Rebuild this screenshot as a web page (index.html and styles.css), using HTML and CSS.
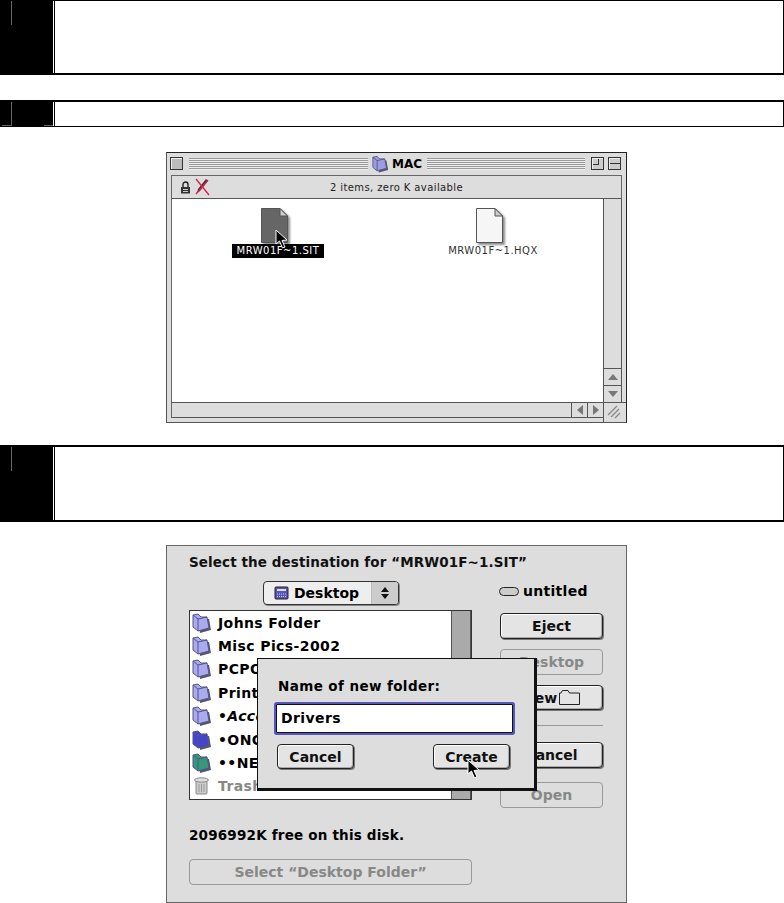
FILE: index.html
```html
<!DOCTYPE html>
<html lang="en">
<head>
    <meta charset="UTF-8">
    <title>Driver install steps</title>
    <link rel="stylesheet" href="styles.css">
</head>
<body>
    <svg class="defs" width="0" height="0">
        <symbol id="folder" viewBox="0 0 20 20">
            <path d="M6 6 L17 6 L19 17 L8 20 Z" fill="#55556f"/>
            <path d="M1 2 L6 1 L9 4 L15 4 L17 15 L6 18 L1 14 Z" fill="currentColor" stroke="#55558a" stroke-width="1"/>
            <path d="M1 2 L6 6 L15 4 M6 6 L6 18" fill="none" stroke="#55558a" stroke-width="1"/>
        </symbol>
        <symbol id="cursor" viewBox="0 0 14 20">
            <path d="M1 1 L1 15 L4.5 12 L7.5 19 L10 18 L7 11.5 L12 11 Z" fill="#000" stroke="#fff" stroke-width="1"/>
        </symbol>
        <symbol id="doc" viewBox="0 0 27 35">
            <path d="M.5 .5 H19 L26.5 8 V34.5 H.5 Z" fill="currentColor" stroke="#555"/>
            <path d="M19 .5 V8 H26.5 Z" fill="#ccc" stroke="#555"/>
        </symbol>
    </svg>

    <section class="step step-tall">
        <div class="step-num"><i class="tick"></i></div>
        <div class="step-body"></div>
    </section>

    <section class="step step-short">
        <div class="step-num"><i class="tick"></i><i class="foot foot-left"></i><i class="foot foot-right"></i></div>
        <div class="step-body"></div>
    </section>

    <div class="finder">
        <div class="finder-title">
            <span class="box"></span>
            <span class="stripes stripes-left"></span>
            <svg class="title-icon" width="17" height="18"><use href="#folder"/></svg>
            <span class="title-text">MAC</span>
            <span class="stripes"></span>
            <span class="box box-zoom"></span>
            <span class="box box-shade"></span>
        </div>
        <div class="finder-info">
            <svg class="lock" width="11" height="13" viewBox="0 0 11 13">
                <path d="M3 6 V3.5 a2.5 2.5 0 0 1 5 0 V6" fill="none" stroke="#222" stroke-width="1.4"/>
                <rect x="1" y="6" width="9" height="6.5" fill="#333"/>
                <path d="M3 8.5 H8 M3 10.5 H8" stroke="#ccc"/>
            </svg>
            <svg class="pencil" width="16" height="18" viewBox="0 0 16 18">
                <path d="M12 1 L14 3 L6 13 L3 15 L4 11 Z" fill="#333"/>
                <path d="M2 1 L15 17 M14 2 L2 16" stroke="#d8204a" stroke-width="1.3"/>
            </svg>
            <span class="info-text">2 items, zero K available</span>
        </div>
        <div class="finder-main">
            <div class="files">
                <div class="file file-sit">
                    <svg class="doc doc-dark" width="27" height="35"><use href="#doc"/></svg>
                    <span class="file-name selected">MRW01F~1.SIT</span>
                </div>
                <div class="file file-hqx">
                    <svg class="doc doc-light" width="27" height="35"><use href="#doc"/></svg>
                    <span class="file-name">MRW01F~1.HQX</span>
                </div>
                <svg class="cursor cursor-finder" width="14" height="20"><use href="#cursor"/></svg>
            </div>
            <div class="vscroll">
                <span class="track"></span>
                <span class="arrow"><svg width="10" height="6"><path d="M5 0 L10 6 H0 Z" fill="#777"/></svg></span>
                <span class="arrow"><svg width="10" height="6"><path d="M5 6 L10 0 H0 Z" fill="#777"/></svg></span>
            </div>
        </div>
        <div class="finder-bottom">
            <span class="track"></span>
            <span class="arrow arrow-h"><svg width="6" height="10"><path d="M0 5 L6 0 V10 Z" fill="#777"/></svg></span>
            <span class="arrow arrow-h"><svg width="6" height="10"><path d="M6 5 L0 0 V10 Z" fill="#777"/></svg></span>
            <span class="grow"><svg width="14" height="14"><path d="M1 10 L10 1 M4 12 L12 4 M8 13 L13 8" stroke="#888" stroke-width="1.3"/></svg></span>
        </div>
    </div>

    <section class="step step-mid">
        <div class="step-num"><i class="tick"></i></div>
        <div class="step-body"></div>
    </section>

    <div class="dialog">
        <h2 class="dialog-title">Select the destination for “MRW01F~1.SIT”</h2>
        <div class="dialog-cols">
            <div class="col-left">
                <div class="popup">
                    <svg width="15" height="14" viewBox="0 0 15 14">
                        <rect x="1" y="1" width="13" height="12" rx="1" fill="#5555bb" stroke="#222"/>
                        <path d="M3 4 H12" stroke="#ddd" stroke-width="2"/>
                        <path d="M3 8 H12 M3 10.5 H12" stroke="#ccd" stroke-dasharray="1 1"/>
                    </svg>
                    <span class="popup-label">Desktop</span>
                    <span class="popup-arrows">
                        <svg width="10" height="14"><path d="M5 1 L9 6 H1 Z M5 13 L9 8 H1 Z" fill="#111"/></svg>
                    </span>
                </div>
                <div class="list">
                    <ul class="list-rows">
                        <li><svg class="f-plain" width="20" height="20"><use href="#folder"/></svg>Johns Folder</li>
                        <li><svg class="f-plain" width="20" height="20"><use href="#folder"/></svg>Misc Pics-2002</li>
                        <li><svg class="f-plain" width="20" height="20"><use href="#folder"/></svg>PCPO</li>
                        <li><svg class="f-plain" width="20" height="20"><use href="#folder"/></svg>Print</li>
                        <li class="alias"><svg class="f-plain" width="20" height="20"><use href="#folder"/></svg>•Acce</li>
                        <li><svg class="f-blue" width="20" height="20"><use href="#folder"/></svg>•ONG</li>
                        <li><svg class="f-green" width="20" height="20"><use href="#folder"/></svg>••NE</li>
                        <li class="dim">
                            <svg width="20" height="20" viewBox="0 0 20 20">
                                <rect x="4" y="5" width="11" height="13" rx="1" fill="#ccc" stroke="#888"/>
                                <ellipse cx="9.5" cy="4" rx="7" ry="2.2" fill="#ddd" stroke="#888"/>
                                <path d="M7 8 V16 M9.5 8 V16 M12 8 V16" stroke="#999"/>
                            </svg>Trash
                        </li>
                    </ul>
                    <span class="list-scroll"></span>
                </div>
                <p class="free">2096992K free on this disk.</p>
                <button class="btn btn-off btn-select">Select “Desktop Folder”</button>
            </div>
            <div class="col-right">
                <div class="disk">
                    <svg width="20" height="9" viewBox="0 0 20 9"><rect x=".5" y=".5" width="19" height="8" rx="4" fill="#ccc" stroke="#222"/></svg>
                    <span>untitled</span>
                </div>
                <button class="btn btn-eject">Eject</button>
                <button class="btn btn-off btn-desktop">Desktop</button>
                <button class="btn btn-new">New
                    <svg width="21" height="15" viewBox="0 0 21 15"><path d="M.5 14.5 V3 H2 L3.5 .5 H9 L10.5 3 H20.5 V14.5 Z" fill="none" stroke="#222"/></svg>
                </button>
                <hr class="rule">
                <button class="btn btn-cancel">Cancel</button>
                <button class="btn btn-off btn-open">Open</button>
            </div>
        </div>

        <div class="modal">
            <label class="modal-label">Name of new folder:</label>
            <div class="modal-input">Drivers</div>
            <div class="modal-btns">
                <button class="btn btn-small">Cancel</button>
                <button class="btn btn-small">Create</button>
            </div>
        </div>
        <svg class="cursor cursor-create" width="14" height="20"><use href="#cursor"/></svg>
    </div>
</body>
</html>
```

FILE: styles.css
```css
* {
    margin: 0;
    padding: 0;
    box-sizing: border-box;
}

body {
    background: #fff;
    color: #000;
    font-family: "DejaVu Sans", sans-serif;
    width: 784px;
    height: 903px;
    overflow: hidden;
}

.defs {
    position: absolute;
}

/* numbered steps */
.step {
    display: flex;
    width: 784px;
    border-top: 1px solid #000;
    border-bottom: 2px solid #000;
    border-right: 1px solid #000;
}

.step-tall {
    height: 75px;
}

.step-short {
    height: 27px;
    margin-top: 25px;
    border-top-width: 2px;
    border-bottom-width: 1px;
}

.step-mid {
    height: 77px;
    margin-top: 22px;
    border-top-width: 2px;
}

.step-num {
    position: relative;
    width: 53px;
    background: #000;
}

.step-body {
    flex: 1;
    border-left: 1px solid #000;
    margin-left: 1px;
}

.tick {
    position: absolute;
    left: 11px;
    top: 0;
    width: 1px;
    height: 24px;
    background: #666;
}

.foot {
    position: absolute;
    bottom: 0;
    height: 1px;
    width: 9px;
    background: #666;
}

.foot-left {
    left: 2px;
}

.foot-right {
    right: 0;
}

/* finder window */
.finder {
    width: 461px;
    height: 271px;
    margin: 25px 0 0 166px;
    background: #ddd;
    border: 1px solid #555;
    border-top-color: #222;
    border-right-color: #222;
    display: flex;
    flex-direction: column;
}

.finder-title {
    display: flex;
    align-items: center;
    gap: 5px;
    height: 22px;
    padding: 0 5px 1px 3px;
}

.box {
    width: 13px;
    height: 13px;
    border: 1px solid #333;
    background: #bbb;
    box-shadow: inset 1px 1px 0 #eee;
    flex-shrink: 0;
    margin-right: 1px;
}

.box-zoom {
    margin: 0 -1px 0 1px;
    background: linear-gradient(#333, #333) 6px 0 / 1px 7px no-repeat, linear-gradient(#333, #333) 0 6px / 7px 1px no-repeat, #ccc;
}

.box-shade {
    margin: 0;
    background: linear-gradient(#333, #333) 0 5px / 100% 1px no-repeat, #ccc;
}

.stripes {
    flex: 1;
    height: 12px;
    background: repeating-linear-gradient(#999 0 1px, #eee 1px 2px);
}

.stripes-left {
    flex: none;
    width: 179px;
}

.title-icon {
    color: #9c9ce0;
    margin: 0 -4px 0 -1px;
}

.title-text {
    font-weight: bold;
    font-size: 12px;
    padding-left: 2px;
}

.finder-info {
    position: relative;
    display: flex;
    align-items: center;
    height: 24px;
    margin: 0 4px;
    padding-left: 8px;
    border: 1px solid #666;
    border-bottom-color: #555;
    background: #ddd;
}

.pencil {
    margin-left: 3px;
}

.info-text {
    position: absolute;
    left: 0;
    right: 0;
    text-align: center;
    font-size: 10px;
    letter-spacing: .4px;
    color: #222;
}

.finder-main {
    flex: 1;
    display: flex;
    margin: 0 4px;
    border-left: 1px solid #666;
}

.files {
    position: relative;
    flex: 1;
    background: #fff;
}

.file {
    position: absolute;
    top: 9px;
    width: 92px;
    display: flex;
    flex-direction: column;
    align-items: center;
}

.file-sit {
    left: 60px;
}

.file-hqx {
    left: 275px;
}

.doc {
    margin-right: 7px;
    filter: drop-shadow(2px 2px 1px rgba(0, 0, 0, .45));
}

.doc-dark {
    color: #666;
}

.doc-light {
    color: #f6f6f6;
}

.file-name {
    font-size: 10px;
    line-height: 14px;
    width: 92px;
    text-align: center;
    color: #333;
    letter-spacing: .5px;
    margin-top: 1px;
}

.selected {
    background: #000;
    color: #fff;
}

.cursor-finder {
    position: absolute;
    left: 103px;
    top: 30px;
}

.vscroll {
    width: 19px;
    display: flex;
    flex-direction: column;
    border-left: 1px solid #555;
    border-right: 1px solid #555;
}

.vscroll .track {
    flex: 1;
    background: #ddd;
}

.arrow {
    display: flex;
    align-items: center;
    justify-content: center;
    height: 17px;
    border-top: 1px solid #555;
    background: #ddd;
}

.finder-bottom {
    display: flex;
    height: 20px;
    margin-left: 4px;
    border-top: 1px solid #555;
}

.finder-bottom .track {
    flex: 1;
    height: 15px;
    border-left: 1px solid #666;
    border-bottom: 1px solid #555;
}

.arrow-h {
    width: 16px;
    height: 15px;
    border-top: 0;
    border-left: 1px solid #555;
    border-bottom: 1px solid #555;
}

.grow {
    width: 23px;
    padding: 1px 0 0 3px;
    border-left: 1px solid #555;
}

/* save dialog */
.dialog {
    position: relative;
    width: 461px;
    height: 358px;
    margin: 23px 0 0 166px;
    padding: 8px 23px 0 22px;
    background: #ddd;
    border: 1px solid #666;
    font-weight: bold;
}

.dialog-title {
    font-size: 13.5px;
    line-height: 16px;
    letter-spacing: .1px;
    color: #111;
}

.dialog-cols {
    display: flex;
    justify-content: space-between;
}

.col-left {
    width: 283px;
}

.popup {
    display: flex;
    align-items: center;
    width: 136px;
    height: 24px;
    margin: 11px 0 5px 74px;
    padding-left: 10px;
    border: 1px solid #333;
    border-radius: 4px;
    background: #eee;
    box-shadow: 1px 1px 0 #888;
    font-size: 14px;
}

.popup-label {
    margin-left: 5px;
    flex: 1;
}

.popup-arrows {
    display: flex;
    align-items: center;
    justify-content: center;
    width: 27px;
    height: 100%;
    background: #ccc;
    border-left: 1px solid #bbb;
    border-radius: 0 3px 3px 0;
}

.list {
    display: flex;
    height: 190px;
    border: 1px solid #333;
    background: #fff;
}

.list-rows {
    flex: 1;
    list-style: none;
}

.list-rows li {
    display: flex;
    align-items: center;
    gap: 6px;
    height: 23.4px;
    padding-left: 2px;
    font-size: 14px;
    letter-spacing: .4px;
    white-space: nowrap;
}

.f-plain {
    color: #aaaaee;
}

.f-blue {
    color: #4444cc;
}

.f-green {
    color: #33997a;
}

.alias {
    font-style: italic;
}

.dim {
    color: #888;
}

.list-scroll {
    width: 20px;
    background: #aaa;
    border-left: 1px solid #555;
    border-right: 1px solid #555;
}

.free {
    font-size: 13.5px;
    line-height: 16px;
    margin-top: 27px;
    letter-spacing: .2px;
}

.btn {
    display: block;
    font-family: inherit;
    font-weight: bold;
    font-size: 14px;
    color: #111;
    background: #e4e4e4;
    border: 1px solid #222;
    border-radius: 4px;
    box-shadow: inset 1px 1px 0 #fff, inset -1px -1px 0 #aaa, 1px 1px 0 #777;
}

.btn-off {
    color: #888;
    background: #ddd;
    border-color: #999;
    box-shadow: none;
}

.btn-select {
    width: 283px;
    height: 26px;
    margin-top: 16px;
}

.col-right {
    width: 103px;
    padding-top: 11px;
}

.disk {
    display: flex;
    align-items: center;
    gap: 4px;
    height: 20px;
    margin: 0 0 12px -1px;
    font-size: 14px;
    letter-spacing: .3px;
}

.col-right .btn {
    width: 103px;
    height: 26px;
}

.col-right .btn-desktop {
    margin-top: 10px;
}

.col-right .btn-new {
    display: flex;
    align-items: center;
    justify-content: center;
    gap: 2px;
    margin-top: 10px;
    height: 25px;
}

.rule {
    border: 0;
    border-top: 1px solid #999;
    margin: 15px 0 16px;
}

.col-right .btn-open {
    margin-top: 14px;
}

/* new folder sheet, sits on top of the dialog */
.modal {
    position: absolute;
    left: 90px;
    top: 112px;
    width: 280px;
    height: 133px;
    padding: 18px 21px 0 18px;
    background: #ddd;
    border: 1px solid #111;
    border-right-width: 3px;
    border-bottom-width: 3px;
}

.modal-label {
    display: block;
    font-size: 13.5px;
    line-height: 18px;
    margin-left: 2px;
    letter-spacing: .4px;
}

.modal-input {
    width: 237px;
    height: 29px;
    margin-top: 9px;
    padding-left: 4px;
    font-size: 14px;
    letter-spacing: .4px;
    line-height: 27px;
    background: #fff;
    border: 1px solid #111;
    border-radius: 1px;
    box-shadow: 0 0 0 2px #5555bb;
}

.modal-btns {
    display: flex;
    justify-content: space-between;
    width: 233px;
    margin: 11px 0 0 1px;
}

.btn-small {
    width: 77px;
    height: 25px;
}

.cursor-create {
    position: absolute;
    left: 300px;
    top: 213px;
}
```
